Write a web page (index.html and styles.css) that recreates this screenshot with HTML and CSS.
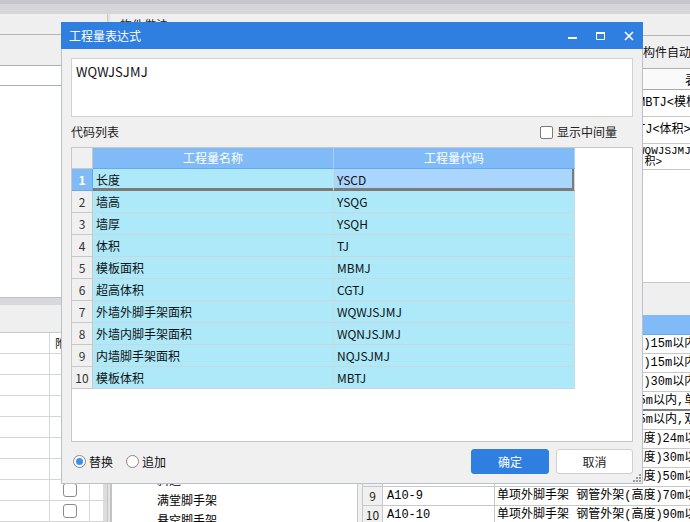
FILE: index.html
```html
<!DOCTYPE html>
<html lang="zh-CN">
<head>
<meta charset="utf-8">
<title>工程量表达式</title>
<link rel="stylesheet" href="styles.css">
</head>
<body>
<div class="app">
  <div class="topbar"></div>
  <div class="main">
    <div class="leftcol">
      <div class="lt-tab"></div>
      <div class="lt-tool"></div>
      <div class="lt-hdr"></div>
      <div class="lt-list"></div>
      <div class="lt-split"></div>
      <div class="lt-tool2"></div>
      <div class="lgrid">
        <div class="lg-row lg-head"><div class="lg-c1"></div><div class="lg-c2">附加</div><div class="lg-c3"></div></div>
        <div class="lg-row"><div class="lg-c1"></div><div class="lg-c2"><span class="cbx"></span></div><div class="lg-c3"></div></div>
        <div class="lg-row"><div class="lg-c1"></div><div class="lg-c2"><span class="cbx"></span></div><div class="lg-c3"></div></div>
        <div class="lg-row"><div class="lg-c1"></div><div class="lg-c2"><span class="cbx"></span></div><div class="lg-c3"></div></div>
        <div class="lg-row"><div class="lg-c1"></div><div class="lg-c2"><span class="cbx"></span></div><div class="lg-c3"></div></div>
        <div class="lg-row"><div class="lg-c1"></div><div class="lg-c2"><span class="cbx"></span></div><div class="lg-c3"></div></div>
        <div class="lg-row"><div class="lg-c1"></div><div class="lg-c2"><span class="cbx"></span></div><div class="lg-c3"></div></div>
        <div class="lg-row"><div class="lg-c1"></div><div class="lg-c2"><span class="cbx"></span></div><div class="lg-c3"></div></div>
        <div class="lg-row"><div class="lg-c1"></div><div class="lg-c2"><span class="cbx"></span></div><div class="lg-c3"></div></div>
      </div>
    </div>
    <div class="vsplit"></div>
    <div class="rightcol">
      <div class="rt-tab"><span class="tabtext">构件做法</span></div>
      <div class="rt-tool"><span class="tooltext">构件自动套做法</span></div>
      <div class="rt-upper">
        <div class="ut-row ut-head">
          <div class="uc w30"></div><div class="uc w70">类别</div><div class="uc w200">名称</div><div class="uc w150">项目特征</div><div class="uc w75">单位</div><div class="uc w140 ctr">表达式</div>
        </div>
        <div class="ut-row r27">
          <div class="uc w30">1</div><div class="uc w70">定</div><div class="uc w200">模板</div><div class="uc w150"></div><div class="uc w75">m2</div><div class="uc w140 expr">MBTJ&lt;模板体积&gt;</div>
        </div>
        <div class="ut-row r27">
          <div class="uc w30">2</div><div class="uc w70">定</div><div class="uc w200">超高</div><div class="uc w150"></div><div class="uc w75">m3</div><div class="uc w140 expr">TJ&lt;体积&gt;</div>
        </div>
        <div class="ut-row r26">
          <div class="uc w30">3</div><div class="uc w70">定</div><div class="uc w200">外脚手架</div><div class="uc w150"></div><div class="uc w75">m2</div><div class="uc w140 expr small">WQWJSJMJ+&lt;外墙外脚手架面<br>&nbsp;积&gt;</div>
        </div>
      </div>
      <div class="rt-band"></div>
      <div class="rt-lower">
        <div class="tree">
          <div class="ti l0">措施项目</div>
          <div class="ti l1">脚手架工程</div>
          <div class="ti l2">综合脚手架</div>
          <div class="ti l2">单项脚手架</div>
          <div class="ti l2">外脚手架</div>
          <div class="ti l2">里脚手架</div>
          <div class="ti l2">挑脚手架</div>
          <div class="ti l2">斜道</div>
          <div class="ti l2">满堂脚手架</div>
          <div class="ti l2">悬空脚手架</div>
        </div>
        <div class="lgap"></div>
        <div class="dt">
          <div class="dt-row dt-head"><div class="dc dn"></div><div class="dc dcode">编码</div><div class="dc ddesc">名称</div></div>
          <div class="dt-row"><div class="dc dn">1</div><div class="dc dcode">A10-1</div><div class="dc ddesc">综合脚手架 钢管外架(高度)15m以内</div></div>
          <div class="dt-row"><div class="dc dn">2</div><div class="dc dcode">A10-2</div><div class="dc ddesc">综合脚手架 钢管外架(高度)15m以内</div></div>
          <div class="dt-row"><div class="dc dn">3</div><div class="dc dcode">A10-3</div><div class="dc ddesc">综合脚手架 钢管外架(高度)30m以内</div></div>
          <div class="dt-row thick"><div class="dc dn">4</div><div class="dc dcode">A10-4</div><div class="dc ddesc">单项外脚手架木架(高度)15m以内,单排</div></div>
          <div class="dt-row"><div class="dc dn">5</div><div class="dc dcode">A10-5</div><div class="dc ddesc">单项外脚手架木架(高度)15m以内,双排</div></div>
          <div class="dt-row"><div class="dc dn">6</div><div class="dc dcode">A10-6</div><div class="dc ddesc">单项外脚手架 钢管外架(高度)24m以内</div></div>
          <div class="dt-row"><div class="dc dn">7</div><div class="dc dcode">A10-7</div><div class="dc ddesc">单项外脚手架 钢管外架(高度)30m以内</div></div>
          <div class="dt-row"><div class="dc dn">8</div><div class="dc dcode">A10-8</div><div class="dc ddesc">单项外脚手架 钢管外架(高度)50m以内</div></div>
          <div class="dt-row"><div class="dc dn">9</div><div class="dc dcode">A10-9</div><div class="dc ddesc">单项外脚手架 钢管外架(高度)70m以内</div></div>
          <div class="dt-row"><div class="dc dn">10</div><div class="dc dcode">A10-10</div><div class="dc ddesc">单项外脚手架 钢管外架(高度)90m以内</div></div>
        </div>
      </div>
    </div>
  </div>
</div>

<div class="dialog">
  <div class="titlebar">
    <span class="title">工程量表达式</span>
    <div class="ctrls">
      <span class="ctrl"><svg width="10" height="10" viewBox="0 0 10 10"><rect x="0" y="6" width="9" height="2" fill="#fff"/></svg></span>
      <span class="ctrl"><svg width="10" height="10" viewBox="0 0 10 10"><path d="M0.5 1.5h8v7h-8z" fill="none" stroke="#fff" stroke-width="1"/><rect x="0" y="1" width="9" height="2" fill="#fff"/></svg></span>
      <span class="ctrl"><svg width="10" height="10" viewBox="0 0 10 10"><path d="M1 1L9 9M9 1L1 9" stroke="#fff" stroke-width="1.6"/></svg></span>
    </div>
  </div>
  <div class="dlg-body">
    <div class="exprbox">WQWJSJMJ</div>
    <div class="listhead">
      <span>代码列表</span>
      <label class="chk"><span class="chkbox"></span><span>显示中间量</span></label>
    </div>
    <div class="codebox">
      <div class="cr ch">
        <div class="cn"></div><div class="cc">工程量名称</div><div class="cc">工程量代码</div>
      </div>
      <div class="cr cur">
        <div class="cn">1</div><div class="cc">长度</div><div class="cc sel">YSCD</div>
      </div>
      <div class="cr"><div class="cn">2</div><div class="cc">墙高</div><div class="cc">YSQG</div></div>
      <div class="cr"><div class="cn">3</div><div class="cc">墙厚</div><div class="cc">YSQH</div></div>
      <div class="cr"><div class="cn">4</div><div class="cc">体积</div><div class="cc">TJ</div></div>
      <div class="cr"><div class="cn">5</div><div class="cc">模板面积</div><div class="cc">MBMJ</div></div>
      <div class="cr"><div class="cn">6</div><div class="cc">超高体积</div><div class="cc">CGTJ</div></div>
      <div class="cr"><div class="cn">7</div><div class="cc">外墙外脚手架面积</div><div class="cc">WQWJSJMJ</div></div>
      <div class="cr"><div class="cn">8</div><div class="cc">外墙内脚手架面积</div><div class="cc">WQNJSJMJ</div></div>
      <div class="cr"><div class="cn">9</div><div class="cc">内墙脚手架面积</div><div class="cc">NQJSJMJ</div></div>
      <div class="cr"><div class="cn">10</div><div class="cc">模板体积</div><div class="cc">MBTJ</div></div>
    </div>
    <div class="footer">
      <div class="radios">
        <label class="radio"><span class="rdot on"></span><span>替换</span></label>
        <label class="radio"><span class="rdot"></span><span>追加</span></label>
      </div>
      <div class="btns">
        <button class="btn primary">确定</button>
        <button class="btn">取消</button>
      </div>
    </div>
  </div>
  <svg class="grip" width="8" height="8" viewBox="0 0 8 8"><rect x="6" y="0" width="2" height="2" fill="#999"/><rect x="3" y="3" width="2" height="2" fill="#999"/><rect x="6" y="3" width="2" height="2" fill="#999"/><rect x="0" y="6" width="2" height="2" fill="#999"/><rect x="3" y="6" width="2" height="2" fill="#999"/><rect x="6" y="6" width="2" height="2" fill="#999"/></svg>
</div>
</body>
</html>
```
FILE: styles.css
```css
* { box-sizing: border-box; }
html, body { margin: 0; padding: 0; }
body {
  width: 690px; height: 522px; overflow: hidden; position: relative;
  background: #f0f0f0;
  font-family: "Noto Sans CJK SC", sans-serif; font-size: 12px; line-height: 16px; color: #000;
}
.app { display: flex; flex-direction: column; height: 522px; }
.topbar { height: 14px; flex: none; background: linear-gradient(#c6c6ca 0 4px, #d6d6da 4px); }
.main { display: flex; height: 508px; }

/* left column */
.leftcol { width: 107px; flex: none; display: flex; flex-direction: column; }
.lt-tab { height: 22px; background: #efefef; border-bottom: 1px solid #b4b4b4; }
.lt-tool { height: 33px; background: #efefef; border-bottom: 1px solid #b0b0b0; }
.lt-hdr { height: 20px; background: #fff; border-bottom: 1px solid #b0b0b0; }
.lt-list { height: 222px; background: #fff; }
.lt-split { height: 9px; background: #d8d8dc; border-top: 1px solid #c0c0c0; }
.lt-tool2 { height: 29px; background: #efefef; border-bottom: 1px solid #c8c8c8; }
.lgrid { flex: 1; background: #fff; }
.lg-row { display: flex; height: 21px; border-bottom: 1px solid #d6d6d6; }
.lg-c1 { width: 50px; border-right: 1px solid #d6d6d6; }
.lg-c2 { width: 40px; border-right: 1px solid #d6d6d6; display: flex; align-items: center; padding-left: 13px; white-space: nowrap; }
.lg-head .lg-c2 { padding-left: 5px; color: #222; }
.lg-c3 { width: 13px; }
.lg-row::after { content: ""; width: 4px; background: #dcdcdc; }
.cbx { width: 14px; height: 14px; border: 1px solid #8a8a8a; border-radius: 3px; background: #fff; }
.vsplit { width: 3px; flex: none; background: #e2e2e4; border-left: 1px solid #c8c8c8; }

/* right column */
.rightcol { width: 580px; flex: none; display: flex; flex-direction: column; overflow: hidden; }
.rt-tab { height: 22px; background: #efefef; border-bottom: 1px solid #b4b4b4; padding-left: 10px; display: flex; align-items: center; }
.tabtext { font-size: 12px; color: #222; }
.rt-tool { height: 33px; background: #f0f0f0; border-bottom: 1px solid #b0b0b0; padding-left: 533px; display: flex; align-items: center; white-space: nowrap; }
.tooltext { font-size: 12px; color: #111; }
.rt-upper { height: 214px; background: #fff; border-bottom: 1px solid #c8c8c8; }
.ut-row { display: flex; border-bottom: 1px solid #c8c8c8; white-space: nowrap; }
.ut-head { height: 21px; background: #fafafa; border-bottom-color: #a8a8a8; }
.r27 { height: 27px; }
.r26 { height: 26px; }
.uc { flex: none; border-right: 1px solid #d0d0d0; padding-left: 3px; display: flex; align-items: center; overflow: hidden; font-family: "Liberation Mono", "Noto Sans CJK SC", monospace; font-size: 12px; }
.uc.ctr { justify-content: center; padding-left: 0; font-family: "Noto Sans CJK SC", sans-serif; font-size: 13px; }
.uc.small { font-size: 11px; line-height: 11px; white-space: nowrap; }
.w30 { width: 30px; } .w70 { width: 70px; } .w200 { width: 200px; } .w150 { width: 150px; } .w75 { width: 75px; } .w140 { width: 140px; }
.rt-band { height: 32px; background: #efefef; }
.rt-lower { height: 207px; display: flex; }
.tree { width: 248px; flex: none; background: #fff; border-left: 2px solid #c4c4c4; border-right: 1px solid #c8c8c8; padding-top: 15px; }
.ti { height: 20px; line-height: 20px; white-space: nowrap; font-size: 12px; }
.l0 { padding-left: 8px; } .l1 { padding-left: 25px; } .l2 { padding-left: 45px; }
.lgap { width: 4px; flex: none; background: #f0f0f0; }
.dt { width: 328px; flex: none; background: #fff; border-left: 1px solid #c8c8c8; }
.dt-row { display: flex; height: 19px; border-bottom: 1px solid #c8c8c8; white-space: nowrap; }
.dt-row.thick { border-bottom: 2px solid #808080; }
.dt-head { height: 20px; background: #80bbf8; border-bottom: 1px solid #6aa8ee; color: #fff; }
.dc { flex: none; border-right: 1px solid #c8c8c8; display: flex; align-items: center; overflow: hidden; font-size: 12px; }
.dn { width: 20px; justify-content: center; background: #f0f0f0; color: #222; }
.dcode { width: 112px; padding-left: 4px; font-family: "Liberation Mono", monospace; }
.ddesc { width: 440px; padding-left: 2px; border-right: none; font-family: "Liberation Mono", "Noto Sans CJK SC", monospace; }
.dt-head .dc { background: transparent; color: #fff; border-right-color: #9cc8f5; justify-content: center; padding-left: 0; font-family: "Noto Sans CJK SC", sans-serif; }

/* dialog */
.dialog {
  position: absolute; left: 61px; top: 22px; width: 582px; height: 462px;
  display: flex; flex-direction: column;
  font-family: "Noto Sans CJK SC", sans-serif; font-size: 12px; line-height: 16px;
}
.titlebar { height: 27px; flex: none; background: #2e7fe0; color: #fff; display: flex; align-items: center; padding-left: 8px; }
.title { font-size: 12px; flex: 1; }
.ctrls { display: flex; }
.ctrl { width: 28px; height: 27px; display: flex; align-items: center; justify-content: center; }
.dlg-body { flex: 1; background: #f0f0f0; border: 1px solid #b9c1ce; border-top: none; padding: 9px 9px 0 9px; display: flex; flex-direction: column; }
.exprbox { height: 59px; flex: none; background: #fff; border: 1px solid #d2d2d2; padding: 4px 4px; font-size: 13px; line-height: 18px; letter-spacing: 0.2px; color: #111; }
.listhead { height: 22px; margin-top: 4px; flex: none; display: flex; align-items: center; justify-content: space-between; color: #222; }
.chk { display: flex; align-items: center; gap: 4px; margin-right: 16px; }
.chkbox { width: 13px; height: 13px; border: 1px solid #7a7a7a; border-radius: 2px; background: #fff; }
.codebox { height: 295px; margin-top: 4px; flex: none; background: #fff; border: 1px solid #c6c6c6; }
.cr { display: flex; height: 22px; }
.cr.ch { height: 21px; }
.cn { width: 21px; flex: none; background: #f0f0f0; border-right: 1px solid #c8c8c8; border-bottom: 1px solid #c8c8c8; display: flex; align-items: center; justify-content: center; color: #333; font-size: 12px; }
.cc { width: 241px; flex: none; background: #ade9f9; border-right: 1px solid #c9dbe2; border-bottom: 1px solid #c9d6dc; display: flex; align-items: center; padding-left: 3px; color: #111; }
.ch .cn { background: #f0f0f0; }
.ch .cc { background: #80bbf8; color: #fff; justify-content: center; padding-left: 0; border-right-color: #a9cff7; border-bottom-color: #66a9f2; }
.cur .cn { background: #80bbf8; color: #fff; font-weight: bold; border-color: #66a9f2; }
.cur .cc { box-shadow: inset 0 -2px #7b7b7b; border-bottom-color: #7b7b7b; }
.cur .cc.sel { background: #aad5fd; box-shadow: inset -2px -2px #7b7b7b; }
.footer { flex: none; margin-top: 7px; height: 25px; display: flex; align-items: center; justify-content: space-between; }
.radios { display: flex; align-items: center; gap: 13px; padding-left: 2px; }
.radio { display: flex; align-items: center; gap: 3px; color: #111; }
.rdot { width: 13px; height: 13px; border: 1px solid #888; border-radius: 50%; background: #fff; display: flex; align-items: center; justify-content: center; }
.rdot.on::after { content: ""; width: 7px; height: 7px; border-radius: 50%; background: #3d8fe9; }
.btns { display: flex; gap: 7px; }
.btn { height: 25px; width: 77px; border: 1px solid #cfcfcf; border-radius: 3px; background: #fff; font-family: "Noto Sans CJK SC", sans-serif; font-size: 12px; line-height: 16px; color: #222; padding: 0; }
.btn.primary { width: 78px; background: #2e7fe0; border-color: #2e7fe0; color: #fff; }
.grip { position: absolute; right: 2px; bottom: 2px; }
```
